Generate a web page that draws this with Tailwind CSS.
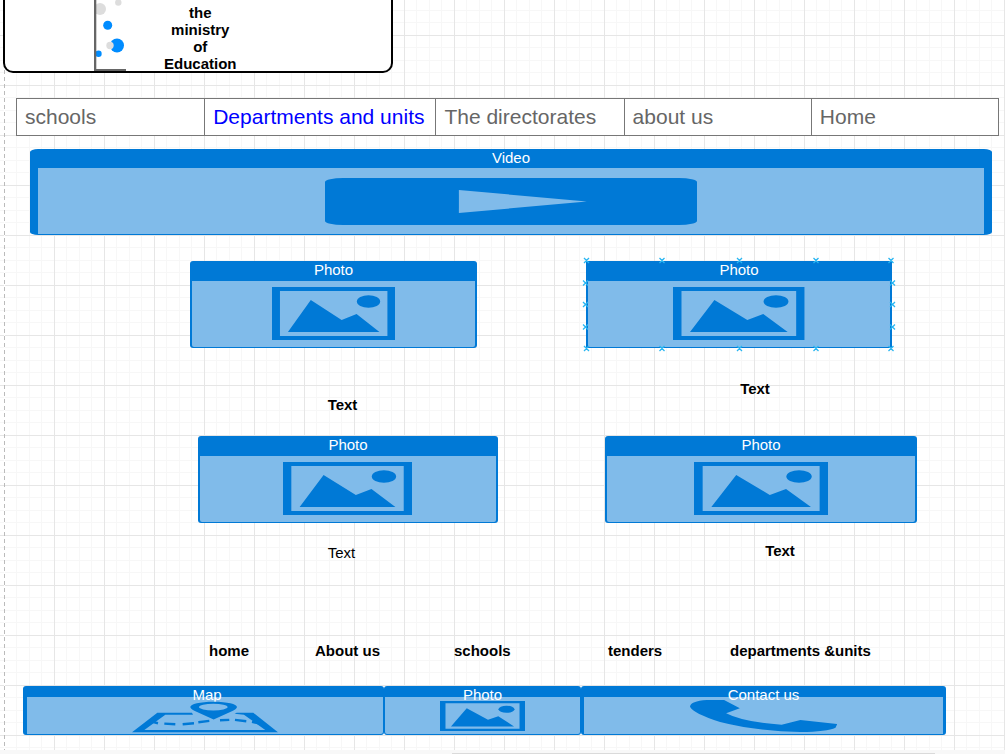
<!DOCTYPE html>
<html lang="en">
<head>
<meta charset="utf-8">
<title>Ministry of Education wireframe</title>
<script src="https://cdn.jsdelivr.net/npm/@tailwindcss/browser@4"></script>
</head>
<body class="flex h-screen flex-col overflow-hidden bg-white font-['Liberation_Sans',Arial,sans-serif] text-[15px] leading-[17px] text-black">

<!-- shared shapes -->
<svg class="hidden" aria-hidden="true">
  <symbol id="photo" viewBox="0 0 124 53" preserveAspectRatio="none">
    <path fill="#0079d6" fill-rule="evenodd" d="M0 0H124V53H0ZM8 4V49H116V4Z"/>
    <path fill="#0079d6" d="M16 45L39 13L70 33L85 27L108 45Z"/>
    <ellipse cx="97" cy="14.500" rx="11.700" ry="6.200" fill="#0079d6"/>
  </symbol>
</svg>

<div class="relative isolate flex-1 overflow-hidden">
  <!-- canvas grid -->
  <svg class="absolute inset-0 -z-10 h-full w-full" aria-hidden="true">
    <defs>
      <pattern id="grid" x="4" y="35" width="50" height="50" patternUnits="userSpaceOnUse">
        <path d="M12.5 0V50M25.5 0V50M37.5 0V50M0 12.5H50M0 25.5H50M0 37.5H50" stroke="#f7f7f7" fill="none"/>
        <path d="M.5 0V50M0 .5H50" stroke="#e6e6e6" fill="none"/>
      </pattern>
    </defs>
    <rect width="100%" height="100%" fill="url(#grid)"/>
    <path d="M4.5 0V2000" stroke="#fff"/>
    <path d="M4.5 0V2000" stroke="#bbb" stroke-dasharray="4 3"/>
  </svg>

  <header class="ml-[3px] flex h-[73px] w-[390px] rounded-b-[10px] border-2 border-t-0 border-black bg-white pl-[89px]">
    <svg class="h-[71px] w-8 shrink-0" viewBox="0 0 32 71" aria-hidden="true">
      <circle cx="6" cy="9" r="6" fill="#ddd"/>
      <circle cx="24.300" cy="2.500" r="3.200" fill="#ddd"/>
      <circle cx="13.700" cy="25.300" r="4.500" fill="#008cff"/>
      <circle cx="23" cy="45.500" r="7" fill="#008cff"/>
      <circle cx="16" cy="45.500" r="3.700" fill="#ddd"/>
      <circle cx="4.500" cy="53.700" r="3.200" fill="#008cff"/>
      <path d="M0 0H2.300V69H32V71H0Z" fill="#666"/>
    </svg>
    <h1 class="ml-[38px] pt-1 text-center font-bold">the<br>ministry<br>of<br>Education</h1>
  </header>

  <nav class="mt-[25px] mr-[6px] ml-4 grid grid-cols-[188fr_231fr_188fr_187fr_188fr] border-y border-[#777] bg-white text-[21px] leading-9 text-[#666]">
    <a href="#schools" class="border-l border-[#777] pl-2 whitespace-nowrap">schools</a>
    <a href="#departments" class="border-l border-[#777] pl-2 whitespace-nowrap text-[#0000ff]">Departments and units</a>
    <a href="#directorates" class="border-l border-[#777] pl-2 whitespace-nowrap">The directorates</a>
    <a href="#about" class="border-l border-[#777] pl-2 whitespace-nowrap">about us</a>
    <a href="#home" class="border-x border-[#777] pl-2 whitespace-nowrap">Home</a>
  </nav>

  <section class="mt-[13px] mr-[13px] ml-[30px] h-[86px] rounded-[8px/3px] bg-[#0079d6] px-2 pb-px">
    <h2 class="h-[19px] text-center text-white">Video</h2>
    <div class="flex h-[66px] items-center justify-center bg-[#80bbea]">
      <button type="button" aria-label="Play video" class="h-[47px] w-[39.4%] rounded-[18px/4px] bg-[#0079d6]">
        <svg class="h-full w-full" viewBox="0 0 373 47" preserveAspectRatio="none"><path d="M134 12L262 23.500L134 35Z" fill="#80bbea"/></svg>
      </button>
    </div>
  </section>

  <section class="mt-[26px] grid grid-cols-[287fr_306fr] gap-x-[109px] pr-[113px] pl-[190px]">
    <figure>
      <div class="h-[87px] rounded-[3px] bg-[#0079d6] px-[2px] pb-px text-center text-white">
        <h2 class="h-5">Photo</h2>
        <div class="flex h-[66px] justify-center rounded-b-[2px] bg-[#80bbea] pt-[6px]"><svg class="h-[53px] w-[43.6%]" role="img" aria-label="Photo"><use href="#photo"/></svg></div>
      </div>
      <figcaption class="mt-12 pl-[18px] text-center font-bold">Text</figcaption>
    </figure>
    <figure>
      <div class="relative h-[87px] bg-[#0079d6] px-[2px] pb-px text-center text-white">
        <h2 class="h-5">Photo</h2>
        <div class="flex h-[66px] justify-center bg-[#80bbea] pt-[6px]"><svg class="h-[53px] w-[43.6%]" role="img" aria-label="Photo"><use href="#photo"/></svg></div>
        <!-- connection points of the hovered shape -->
        <svg class="absolute inset-0 h-full w-full overflow-visible" viewBox="0 0 306 87" preserveAspectRatio="none" aria-hidden="true">
          <g stroke="#29b6f2" stroke-width="1.300" fill="none">
            <path d="M-2 -3l5 5m0-5l-5 5M73.500-3l5 5m0-5l-5 5M151-3l5 5m0-5l-5 5M227.500-3l5 5m0-5l-5 5M302.500-3l5 5m0-5l-5 5"/>
            <path d="M-2 85l5 5m0-5l-5 5M73.500 85l5 5m0-5l-5 5M151 85l5 5m0-5l-5 5M227.500 85l5 5m0-5l-5 5M302.500 85l5 5m0-5l-5 5"/>
            <path d="M-3 19.500l5 5m0-5l-5 5M-3 41l5 5m0-5l-5 5M-3 63.500l5 5m0-5l-5 5M304 19.500l5 5m0-5l-5 5M304 41l5 5m0-5l-5 5M304 63.500l5 5m0-5l-5 5"/>
          </g>
        </svg>
      </div>
      <figcaption class="mt-8 pl-8 text-center font-bold">Text</figcaption>
    </figure>
  </section>

  <section class="mt-[23px] grid grid-cols-[300fr_312fr] gap-x-[107px] pr-[88px] pl-[198px]">
    <figure>
      <div class="h-[87px] rounded-[3px] bg-[#0079d6] px-[2px] pb-px text-center text-white">
        <h2 class="h-5">Photo</h2>
        <div class="flex h-[66px] justify-center rounded-b-[2px] bg-[#80bbea] pt-[6px]"><svg class="h-[53px] w-[43.6%]" role="img" aria-label="Photo"><use href="#photo"/></svg></div>
      </div>
      <figcaption class="mt-[21px] pr-[13px] text-center">Text</figcaption>
    </figure>
    <figure>
      <div class="h-[87px] rounded-[3px] bg-[#0079d6] px-[2px] pb-px text-center text-white">
        <h2 class="h-5">Photo</h2>
        <div class="flex h-[66px] justify-center rounded-b-[2px] bg-[#80bbea] pt-[6px]"><svg class="h-[53px] w-[43.6%]" role="img" aria-label="Photo"><use href="#photo"/></svg></div>
      </div>
      <figcaption class="mt-[19px] pl-[38px] text-center font-bold">Text</figcaption>
    </figure>
  </section>

  <footer>
    <nav class="mt-[81px] grid grid-cols-[106fr_139fr_154fr_122fr_275fr] pl-[209px] font-bold whitespace-nowrap">
      <a href="#home">home</a>
      <a href="#about">About us</a>
      <a href="#schools">schools</a>
      <a href="#tenders">tenders</a>
      <a href="#departments">departments &amp;units</a>
    </nav>
    <div class="mt-[27px] mr-[59px] ml-[23px] grid grid-cols-[361fr_197fr_365fr] text-center text-white">
      <section class="h-[49px] rounded-[3px] border-t-[11px] border-r border-b border-l-4 border-[#0079d6] bg-[#80bbea]">
        <h2 class="-mt-[11px] pl-1">Map</h2>
        <svg class="-mt-[2px] ml-[29.500%] h-8 w-[41%]" viewBox="398 196 438 95" preserveAspectRatio="none" role="img" aria-label="Map">
          <path fill="#0079d6" fill-rule="evenodd" d="M398 289L474 231H578L581 237H498L435 282H798L734 237L706 234L712 231H762L836 289Z"/>
          <path fill="#0079d6" fill-rule="evenodd" d="M643 251L585 225Q573 219 573 214C573 205 602 198 643 198S713 205 713 214Q713 219 701 225ZM599 214A43 10 0 0 0 685 214A43 10 0 0 0 599 214Z"/>
          <path stroke="#0079d6" stroke-width="7" fill="none" d="M460 258L476 262M495 263L528 265M550 265L584 262M597 259L630 255M662 253L690 252M707 252L741 256M758 258L782 263"/>
        </svg>
      </section>
      <section class="h-[49px] rounded-[3px] border border-t-[11px] border-[#0079d6] bg-[#80bbea]">
        <h2 class="-mt-[11px]">Photo</h2>
        <svg class="mx-auto -mt-[2px] h-[30px] w-[43.6%]" role="img" aria-label="Photo"><use href="#photo"/></svg>
      </section>
      <section class="h-[49px] rounded-[3px] border-x-[3px] border-t-[11px] border-b border-[#0079d6] bg-[#80bbea]">
        <h2 class="-mt-[11px]">Contact us</h2>
        <svg class="mx-auto -mt-[3px] h-8 w-[41%]" viewBox="360 195 440 96" preserveAspectRatio="none" role="img" aria-label="Telephone">
          <path fill="#0079d6" d="M360 215Q362 198 410 195H462L509 220L468 235Q520 262 634 269L690 255L800 267L795 278Q770 290 690 291Q560 289 450 261Q370 235 360 215Z"/>
        </svg>
      </section>
    </div>
  </footer>
</div>

<!-- horizontal scrollbar strip -->
<div class="flex h-1 shrink-0 items-end bg-[#f8f8f8] pr-[70px] pl-[452px]"><div class="h-px flex-1 bg-[#dadada]"></div></div>
</body>
</html>
